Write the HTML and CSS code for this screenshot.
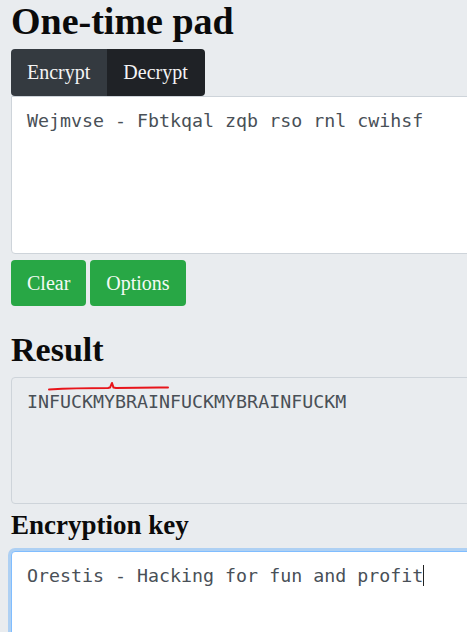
FILE: index.html
```html
<!DOCTYPE html>
<html lang="en">
<head>
<meta charset="utf-8">
<title>One-time pad</title>
<link rel="stylesheet" href="styles.css">
</head>
<body>
<main class="page">
  <h1 class="title">One-time pad</h1>
  <div class="tabs">
    <button class="tab tab-encrypt">Encrypt</button>
    <button class="tab tab-decrypt">Decrypt</button>
  </div>
  <div class="field field-input">Wejmvse - Fbtkqal zqb rso rnl cwihsf</div>
  <div class="actions">
    <button class="btn">Clear</button>
    <button class="btn">Options</button>
  </div>
  <h2 class="section">Result</h2>
  <div class="field field-result">
    <svg class="mark" width="124" height="12" viewBox="0 0 124 12">
      <path d="M1 9.5 C 18 8.5, 45 8, 60 8 L 62 7.6 L 64 3 L 65.5 7.6 L 68 8 C 85 7.6, 105 7.4, 120 7.5" fill="none" stroke="#e8151b" stroke-width="2" stroke-linecap="round" stroke-linejoin="round"/>
    </svg>INFUCKMYBRAINFUCKMYBRAINFUCKM</div>
  <h3 class="subsection">Encryption key</h3>
  <div class="field field-key">Orestis - Hacking for fun and profit<span class="caret"></span></div>
</main>
</body>
</html>
```

FILE: styles.css
```css
html, body {
  margin: 0;
  padding: 0;
  overflow: hidden;
  background: #e9ecef;
}

.page {
  width: 520px;
  padding-left: 11px;
  font-family: "Liberation Serif", "Times New Roman", serif;
  color: #0b0b0b;
}

.title {
  margin: 0;
  font-size: 38px;
  line-height: 42px;
  font-weight: 700;
}

.tabs {
  display: inline-flex;
  margin-top: 7px;
  border-radius: 4px;
  overflow: hidden;
  vertical-align: top;
}

.tab {
  font-family: inherit;
  font-size: 20px;
  line-height: 31px;
  padding: 8px 17px 8px 16px;
  border: 0;
  color: #f4f4f4;
  margin: 0;
}

.tab-encrypt { background: #343a40; }
.tab-decrypt { background: #1f2226; }

.field {
  box-sizing: border-box;
  font-family: "DejaVu Sans Mono", "Liberation Mono", monospace;
  font-size: 18.3px;
  line-height: 27px;
  color: #495057;
  padding: 10px 15px;
  border: 1px solid #ced4da;
  border-radius: 4px;
  position: relative;
}

.field-input {
  background: #fff;
  height: 158px;
  margin-top: 0;
  border-top-left-radius: 0;
}

.actions {
  display: flex;
  gap: 4px;
  margin-top: 6px;
}

.btn {
  font-family: "Liberation Serif", "Times New Roman", serif;
  font-size: 20px;
  line-height: 30px;
  padding: 8px 16px;
  border: 0;
  border-radius: 4px;
  background: #28a745;
  color: #f4fbf5;
}

.section {
  margin: 21px 0 0 0;
  font-size: 34px;
  line-height: 46px;
  font-weight: 700;
}

.field-result {
  margin-top: 4px;
  background: #e9ecef;
  height: 127px;
}

.mark {
  position: absolute;
  left: 36px;
  top: 2px;
}

.subsection {
  margin: 2px 0 0 0;
  font-size: 27px;
  line-height: 38px;
  font-weight: 700;
}

.field-key {
  margin-top: 7px;
  background: #fff;
  height: 120px;
  border-color: #80bdff;
  box-shadow: 0 0 0 3px rgba(0, 123, 255, 0.25);
}

.caret {
  display: inline-block;
  width: 1px;
  height: 21px;
  background: #222;
  vertical-align: -4px;
}
```
